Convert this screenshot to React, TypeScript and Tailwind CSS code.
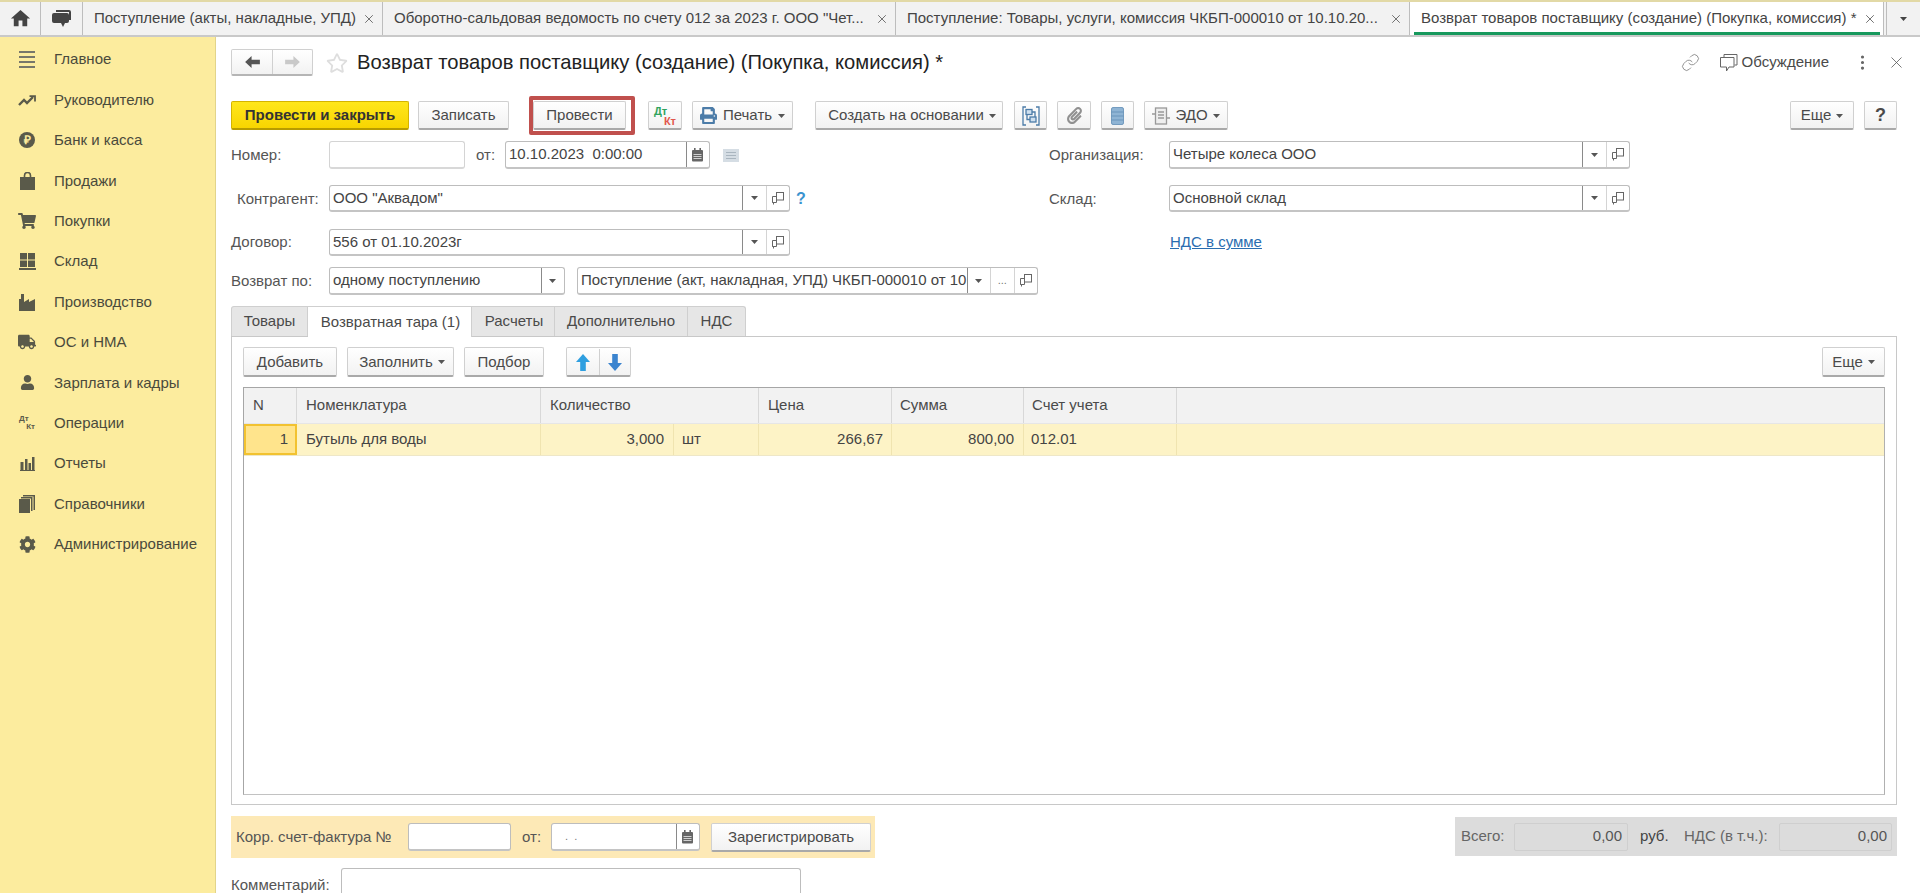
import React from "react";
import { Link, X, MoreVertical } from "lucide-react";
import { MdHome } from "react-icons/md";
import { FaShoppingCart, FaUser, FaCog, FaTruck, FaPrint, FaRegStar, FaPaperclip } from "react-icons/fa";

const Caret = ({ c = "#555" }: { c?: string }) => (
  <svg width="7" height="4" viewBox="0 0 7 4" className="shrink-0"><path d="M0 0h7L3.5 4z" fill={c} /></svg>
);
const Copy = () => (
  <svg width="12" height="13" viewBox="0 0 12 13" fill="none" stroke="#666" strokeWidth="1"><rect x="4.5" y="0.5" width="7" height="7.5" fill="#fff" /><path d="M4.5 4.5h-4v6h1v2M0.5 10.5h4V8" /></svg>
);
const Cal = () => (
  <svg width="13" height="14" viewBox="0 0 13 14"><rect x="1" y="2" width="11" height="11.5" rx="1" fill="#666" /><rect x="3" y="0" width="1.6" height="3" fill="#666" /><rect x="8.4" y="0" width="1.6" height="3" fill="#666" /><path d="M2.5 6.5h8M2.5 8.5h8M2.5 10.5h8" stroke="#ddd" strokeWidth="0.9" /></svg>
);
const ArrowH = ({ c, flip }: { c: string; flip?: boolean }) => (
  <svg width="15" height="12" viewBox="0 0 16 13" className={flip ? "rotate-180" : ""}><path d="M0 6.5L7 0v4h9v5H7v4z" fill={c} /></svg>
);
const ArrowV = ({ c, flip }: { c: string; flip?: boolean }) => (
  <svg width="14" height="17" viewBox="0 0 14 17" className={flip ? "rotate-180" : ""}><path d="M7 0l7 8H9.8v9H4.2V8H0z" fill={c} /></svg>
);
const Ic = ({ children }: { children: React.ReactNode }) => (
  <span className="w-[18px] h-[20px] flex items-center justify-center text-[#5a5a4a]">{children}</span>
);

const menu: [React.ReactNode, string][] = [
  [<svg width="16" height="17" viewBox="0 0 16 17" fill="#77776a"><rect y="0" width="16" height="2" /><rect y="5" width="16" height="2" /><rect y="10" width="16" height="2" /><rect y="15" width="16" height="2" /></svg>, "Главное"],
  [<svg width="18" height="11" viewBox="0 0 18 11" fill="none" stroke="#5a5a4a" strokeWidth="2.4"><path d="M1 10l5-5 3 3 6-6" /><path d="M11.5 1.2H17V6.5" strokeWidth="1.8" /></svg>, "Руководителю"],
  [<span className="w-4 h-4 rounded-full bg-[#5a5a4a] text-[#fcec9e] text-[12px] font-bold flex items-center justify-center leading-none">₽</span>, "Банк и касса"],
  [<svg width="15" height="18" viewBox="0 0 15 18" fill="#5a5a4a"><path d="M0 5h15v13H0z" /><path d="M4.5 7V3.5a3 3 0 0 1 6 0V7" fill="none" stroke="#5a5a4a" strokeWidth="1.6" /></svg>, "Продажи"],
  [<FaShoppingCart size={18} />, "Покупки"],
  [<svg width="17" height="17" viewBox="0 0 17 17" fill="#5a5a4a"><rect x="1" y="0" width="7" height="6.5" /><rect x="9" y="0" width="7" height="6.5" /><rect x="1" y="7.5" width="7" height="6.5" /><rect x="9" y="7.5" width="7" height="6.5" /><rect y="15" width="17" height="2" /></svg>, "Склад"],
  [<svg width="16" height="17" viewBox="0 0 16 17" fill="#5a5a4a"><path d="M0 17V5h2V0h3v8l5-3v3l6-3v12z" /></svg>, "Производство"],
  [<FaTruck size={18} />, "ОС и НМА"],
  [<FaUser size={15} />, "Зарплата и кадры"],
  [<span className="flex flex-col w-4 font-bold text-[8px] leading-[8px] text-[#5a5a4a]"><span>Дт</span><span className="text-right">Кт</span></span>, "Операции"],
  [<svg width="15" height="14" viewBox="0 0 15 14" fill="#5a5a4a"><rect x="0.5" y="5" width="3" height="8" /><rect x="5" y="2" width="2.5" height="11" /><rect x="8.5" y="6" width="2.5" height="7" /><rect x="12" y="0" width="2.5" height="13" /><rect y="13" width="15" height="1" /></svg>, "Отчеты"],
  [<svg width="16" height="18" viewBox="0 0 16 18" fill="#5a5a4a"><path d="M4 0h12v15h-1.5V1.5H4z" /><path d="M2 2h11.5v14H12V3.5H2z" /><path d="M0 4h11v14H0z" /></svg>, "Справочники"],
  [<FaCog size={17} />, "Администрирование"],
];

const Tab = ({ w, text, active }: { w: string; text: string; active?: boolean }) => (
  <div className={`${w} h-full shrink-0 flex items-center pl-[11px] relative border-r border-[#bdbdbd] ${active ? "bg-white" : ""}`}>
    <span className="flex-1 whitespace-nowrap overflow-hidden text-[15px] text-[#444]">{text}</span>
    <X size={14} strokeWidth={1.4} color="#555" className="mr-[6px] ml-[2px] shrink-0" />
    {active && <span className="absolute left-[4px] right-[3px] bottom-0 h-[3px] bg-[#17995d]" />}
  </div>
);

const btn = "shrink-0 flex items-center justify-center h-[29px] pt-px rounded-[2px] border border-[#d0d0d0] border-b-2 border-b-[#a9a9a9] bg-gradient-to-b from-white to-[#f2f2f2] text-[15px] text-[#4a4a4a] whitespace-nowrap";

const fieldBox = "shrink-0 flex items-stretch rounded-[3px] border border-[#bdbdbd] border-b-2 border-b-[#c4c4c4] bg-white text-[15px] text-[#444] overflow-hidden";
const Sub = ({ children, dark }: { children: React.ReactNode; dark?: boolean }) => (
  <span className={`w-[23.5px] shrink-0 flex items-center justify-center border-l ${dark ? "border-[#8a8a8a]" : "border-[#d4d4d4]"}`}>{children}</span>
);
const Text = ({ children }: { children?: React.ReactNode }) => (
  <span className="flex-1 min-w-0 pl-[3px] flex items-center whitespace-pre overflow-hidden">{children}</span>
);
const SelectBtns = () => (<><Sub dark><Caret /></Sub><Sub><Copy /></Sub></>);

const Lbl = ({ className, children }: { className: string; children: React.ReactNode }) => (
  <span className={`shrink-0 text-[15px] text-[#555] whitespace-nowrap ${className}`}>{children}</span>
);

const headCell = "shrink-0 h-full flex items-center pb-px border-r border-[#d8d8d8] text-[15px] text-[#4a4a4a]";
const rowCell = "shrink-0 h-full flex items-center border-r border-[#f0e4b0] text-[15px] text-[#444]";

export default function App() {
  return (
    <div className="w-[1920px] h-[893px] overflow-hidden flex flex-col bg-white font-['Liberation_Sans',Arial,sans-serif]">
      <div className="h-[37px] shrink-0 flex bg-[#f2f2f2] border-t-2 border-t-[#e2d9a6] border-b-2 border-b-[#c9c9c9]">
        <div className="w-[41px] h-full flex items-center justify-center border-r border-[#bdbdbd] text-[#444]"><MdHome size={23} /></div>
        <div className="w-[42px] h-full flex items-center justify-center border-r border-[#bdbdbd]">
          <svg width="19" height="17" viewBox="0 0 19 17" fill="#444"><path d="M4 0h13a2 2 0 0 1 2 2v8h-2V2H4z" /><path d="M2 3h13a2 2 0 0 1 2 2v6a2 2 0 0 1-2 2h-2l-2 4-2-4H2a2 2 0 0 1-2-2V5a2 2 0 0 1 2-2z" /></svg>
        </div>
        <Tab w="w-[300px]" text="Поступление (акты, накладные, УПД)" />
        <Tab w="w-[513px]" text={'Оборотно-сальдовая ведомость по счету 012 за 2023 г. ООО "Чет...'} />
        <Tab w="w-[514px]" text="Поступление: Товары, услуги, комиссия ЧКБП-000010 от 10.10.20..." />
        <Tab w="w-[474px]" text="Возврат товаров поставщику (создание) (Покупка, комиссия) *" active />
        <div className="flex-1 h-full ml-[2px] flex items-center justify-center border-l border-[#bdbdbd]"><Caret c="#444" /></div>
      </div>

      <div className="flex-1 min-h-0 flex">
        <aside className="w-[216px] shrink-0 bg-[#fcec9e] border-r border-[#e2d48a] pt-[2.5px]">
          {menu.map(([icon, label]) => (
            <div key={label} className="h-[40.4px] flex items-center pl-[18px]">
              <Ic>{icon}</Ic>
              <span className="ml-[18px] text-[15px] text-[#4a4a3c] whitespace-nowrap">{label}</span>
            </div>
          ))}
        </aside>

        <main className="flex-1 min-w-0 pl-[15px] pr-[23px] flex flex-col overflow-hidden">
          <div className="mt-[12px] h-[27px] flex items-center shrink-0">
            <div className="w-[82px] h-[27px] flex rounded-[2px] border border-[#d0d0d0] border-b-2 border-b-[#b5b5b5] bg-gradient-to-b from-white to-[#f2f2f2]">
              <span className="w-[41px] flex items-center justify-center border-r border-[#d0d0d0]"><ArrowH c="#555" /></span>
              <span className="flex-1 flex items-center justify-center"><ArrowH c="#c9c9c9" flip /></span>
            </div>
            <FaRegStar size={22} color="#dedede" className="ml-[13px]" />
            <h1 className="ml-[9px] text-[20.2px] font-normal text-[#222] whitespace-nowrap">Возврат товаров поставщику (создание) (Покупка, комиссия) *</h1>
            <div className="ml-auto -mr-[9px] flex items-center">
              <Link size={19} strokeWidth={1} color="#777" />
              <svg width="19" height="19" viewBox="0 0 19 19" fill="none" stroke="#666" strokeWidth="1" className="ml-[19px]"><path d="M5 4V1.5h13V12h-2.5" /><path d="M1.5 4.5h13.5V14h-5l-2.5 4v-4h-6z" /></svg>
              <span className="ml-[4px] text-[15px] text-[#4a4a4a]">Обсуждение</span>
              <MoreVertical size={19} strokeWidth={2} color="#666" className="ml-[24px]" />
              <X size={19} strokeWidth={1} color="#555" className="ml-[15px]" />
            </div>
          </div>

          <div className="mt-[25px] h-[29px] shrink-0 flex items-center">
            <div className="shrink-0 w-[178px] h-[29px] pt-px flex items-center justify-center rounded-[2px] border border-[#d4b400] border-b-2 border-b-[#b89c00] bg-gradient-to-b from-[#ffe71a] to-[#f8d500] text-[15px] font-bold text-[#333] whitespace-nowrap">Провести и закрыть</div>
            <div className={`${btn} w-[91px] ml-[9px]`}>Записать</div>
            <div className="shrink-0 ml-[20px] w-[106px] h-[39px] flex items-center border-[4px] border-[#c0504d] rounded-[2px]">
              <div className={`${btn} w-[93px]`}>Провести</div>
            </div>
            <div className={`${btn} w-[34px] ml-[13px]`}>
              <span className="flex flex-col w-[22px] font-bold text-[11px] leading-[10px]"><span className="text-[#2fa35d]">Дт</span><span className="text-right text-[#e2574c]">Кт</span></span>
            </div>
            <div className={`${btn} w-[101px] ml-[10px] gap-[6px]`}><FaPrint size={17} color="#4c7ca8" />Печать<Caret /></div>
            <div className={`${btn} w-[188px] ml-[22px] gap-[5px] pl-[6px]`}>Создать на основании<Caret /></div>
            <div className={`${btn} w-[33px] ml-[11px]`}>
              <svg width="18" height="20" viewBox="0 0 18 20" fill="none" stroke="#4c7ca8" strokeWidth="1.3"><path d="M4 1H1v18h3" /><path d="M14 1h3v18h-3" /><rect x="4" y="3.5" width="6" height="5" fill="#cfe0ef" /><rect x="8" y="11" width="6" height="5" fill="#cfe0ef" /><path d="M10 6h3v5M8 13.5H5V8.5" /></svg>
            </div>
            <div className={`${btn} w-[34px] ml-[10px]`}><FaPaperclip size={17} color="#909090" /></div>
            <div className={`${btn} w-[33px] ml-[10px]`}>
              <svg width="13" height="18" viewBox="0 0 13 18" fill="#8fb4d4" stroke="#5f8db5" strokeWidth="0.8"><rect x="0.5" y="0.5" width="12" height="17" rx="1.5" /><path d="M0.5 5h12M0.5 9h12M0.5 13h12" /></svg>
            </div>
            <div className={`${btn} w-[84px] ml-[10px] gap-[5px]`}>
              <svg width="18" height="18" viewBox="0 0 18 18" fill="none" stroke="#999" strokeWidth="1.3"><rect x="3.5" y="1" width="11" height="16" fill="#eee" /><path d="M6 5h6M6 8h6M6 11h6M0 7h3M15 11h3" /></svg>
              ЭДО<Caret />
            </div>
            <div className={`${btn} w-[64px] ml-auto gap-[5px]`}>Еще<Caret /></div>
            <div className={`${btn} w-[33px] ml-[10px] font-bold text-[18px]`}>?</div>
          </div>

          <div className="mt-[11px] h-[28px] shrink-0 flex items-center">
            <div className="w-[818px] shrink-0 flex items-center">
              <Lbl className="w-[98px]">Номер:</Lbl>
              <div className={`${fieldBox} w-[136px] h-[28px] border-[#d4d4d4] border-b-[#d8d8d8]`} />
              <Lbl className="w-[29px] ml-[11px]">от:</Lbl>
              <div className={`${fieldBox} w-[205px] h-[28px]`}><Text>10.10.2023  0:00:00</Text><Sub dark><Cal /></Sub></div>
              <svg width="16" height="13" viewBox="0 0 16 13" className="ml-[13px]"><rect width="16" height="13" fill="#d5dde4" /><path d="M3 3.5h10M3 6.5h10M3 9.5h10" stroke="#a9b5bf" /></svg>
            </div>
            <Lbl className="w-[120px]">Организация:</Lbl>
            <div className={`${fieldBox} w-[461px] h-[28px]`}><Text>Четыре колеса ООО</Text><SelectBtns /></div>
          </div>

          <div className="mt-[16px] h-[27px] shrink-0 flex items-center">
            <div className="w-[818px] shrink-0 flex items-center">
              <Lbl className="w-[98px] pl-[6px] pt-px">Контрагент:</Lbl>
              <div className={`${fieldBox} w-[461px] h-[27px]`}><Text><span className="pt-px">ООО "Аквадом"</span></Text><SelectBtns /></div>
              <span className="ml-[6px] text-[16px] font-bold text-[#3a93cf]">?</span>
            </div>
            <Lbl className="w-[120px] pt-px">Склад:</Lbl>
            <div className={`${fieldBox} w-[461px] h-[27px]`}><Text><span className="pt-px">Основной склад</span></Text><SelectBtns /></div>
          </div>

          <div className="mt-[17px] h-[27px] shrink-0 flex items-center">
            <div className="w-[818px] shrink-0 flex items-center">
              <Lbl className="w-[98px]">Договор:</Lbl>
              <div className={`${fieldBox} w-[461px] h-[27px]`}><Text>556 от 01.10.2023г</Text><SelectBtns /></div>
            </div>
            <span className="ml-[121px] text-[15px] text-[#2a6db0] underline whitespace-nowrap">НДС в сумме</span>
          </div>

          <div className="mt-[11px] h-[28px] shrink-0 flex items-center">
            <Lbl className="w-[98px]">Возврат по:</Lbl>
            <div className={`${fieldBox} w-[236px] h-[28px]`}><Text>одному поступлению</Text><Sub dark><Caret /></Sub></div>
            <div className={`${fieldBox} w-[461px] h-[28px] ml-[12px] text-[15.2px]`}>
              <Text>Поступление (акт, накладная, УПД) ЧКБП-000010 от 10</Text>
              <Sub dark><Caret /></Sub>
              <Sub><span className="text-[11px] text-[#777] leading-none">...</span></Sub>
              <Sub><Copy /></Sub>
            </div>
          </div>

          <div className="mt-[11px] h-[30px] shrink-0 flex items-stretch text-[15px] text-[#4a4a4a]">
            <div className="w-[77px] flex items-center justify-center bg-[#e6e6e6] border border-[#cfcfcf] border-b-0 rounded-tl-[3px]">Товары</div>
            <div className="w-[164px] pl-[2px] flex items-center justify-center bg-white border-t border-r border-[#cfcfcf] -mb-px z-10">Возвратная тара (1)</div>
            <div className="w-[83px] pl-[2px] flex items-center justify-center bg-[#e6e6e6] border-t border-r border-[#cfcfcf]">Расчеты</div>
            <div className="w-[133px] flex items-center justify-center bg-[#e6e6e6] border-t border-r border-[#cfcfcf]">Дополнительно</div>
            <div className="w-[58px] flex items-center justify-center bg-[#e6e6e6] border-t border-r border-[#cfcfcf] rounded-tr-[3px]">НДС</div>
          </div>

          <div className="h-[469px] shrink-0 flex flex-col border border-[#c8c8c8] px-[11px] pt-[10px] pb-[9px]">
            <div className="h-[30px] shrink-0 flex items-center">
              <div className={`${btn} h-[30px] w-[94px]`}>Добавить</div>
              <div className={`${btn} h-[30px] w-[107px] ml-[10px] gap-[5px] pl-[3px]`}>Заполнить<Caret /></div>
              <div className={`${btn} h-[30px] w-[80px] ml-[10px]`}>Подбор</div>
              <div className={`${btn} h-[30px] w-[65px] ml-[22px]`}>
                <span className="w-[33px] h-full flex items-center justify-center border-r border-[#d0d0d0]"><ArrowV c="#2f9fe0" /></span>
                <span className="flex-1 h-full flex items-center justify-center"><ArrowV c="#3b84cf" flip /></span>
              </div>
              <div className={`${btn} h-[30px] w-[63px] ml-auto gap-[5px]`}>Еще<Caret /></div>
            </div>

            <div className="mt-[10px] flex-1 min-h-0 border border-[#a6a6a6] border-b-[#c2c2c2] border-r-[#b0b0b0]">
              <div className="h-[35px] flex bg-[#f2f2f2]">
                <div className={`${headCell} w-[53px] pl-[9px]`}>N</div>
                <div className={`${headCell} w-[244px] pl-[9px]`}>Номенклатура</div>
                <div className={`${headCell} w-[218px] pl-[9px]`}>Количество</div>
                <div className={`${headCell} w-[133px] pl-[9px]`}>Цена</div>
                <div className={`${headCell} w-[132px] pl-[8px]`}>Сумма</div>
                <div className={`${headCell} w-[153px] pl-[8px]`}>Счет учета</div>
                <div className="flex-1" />
              </div>
              <div className="h-[33px] flex bg-[#fdf3c6] border-t border-[#e6e6e6] border-b border-b-[#eee7c8]">
                <div className="w-[53px] shrink-0 h-full flex items-center justify-end pr-[7px] bg-[#ffe48c] border-2 border-[#f2c230] text-[15px] text-[#444]">1</div>
                <div className={`${rowCell} w-[244px] pl-[9px]`}>Бутыль для воды</div>
                <div className={`${rowCell} w-[133px] justify-end pr-[9px]`}>3,000</div>
                <div className={`${rowCell} w-[85px] pl-[8px]`}>шт</div>
                <div className={`${rowCell} w-[133px] justify-end pr-[8px]`}>266,67</div>
                <div className={`${rowCell} w-[132px] justify-end pr-[9px]`}>800,00</div>
                <div className={`${rowCell} w-[153px] pl-[7px]`}>012.01</div>
                <div className="flex-1" />
              </div>
            </div>
          </div>

          <div className="mt-[11px] shrink-0 flex justify-between items-start">
            <div className="w-[644px] h-[42px] flex items-center bg-[#fde9b6] pl-[5px] text-[15px]">
              <Lbl className="w-[172px] text-[#4a4030]">Корр. счет-фактура №</Lbl>
              <div className={`${fieldBox} w-[103px] h-[28px]`} />
              <Lbl className="w-[29px] ml-[11px]">от:</Lbl>
              <div className={`${fieldBox} w-[149px] h-[28px]`}>
                <Text><span className="pl-[10px] text-[11px] text-[#777]">.  .</span></Text>
                <Sub dark><Cal /></Sub>
              </div>
              <div className={`${btn} w-[160px] ml-[11px]`}>Зарегистрировать</div>
            </div>
            <div className="w-[442px] h-[39px] mt-px flex items-center bg-[#dcdcdc] pl-[6px] text-[15px]">
              <span className="w-[53px] shrink-0 text-[#666]">Всего:</span>
              <div className="w-[114px] shrink-0 h-[28px] flex items-center justify-end pr-[5px] rounded-[2px] border border-[#cfcfcf] text-[#555]">0,00</div>
              <span className="ml-[12px] w-[44px] shrink-0 text-[#444]">руб.</span>
              <span className="w-[95px] shrink-0 text-[#666] whitespace-nowrap">НДС (в т.ч.):</span>
              <div className="w-[113px] shrink-0 h-[28px] flex items-center justify-end pr-[4px] rounded-[2px] border border-[#cfcfcf] text-[#555]">0,00</div>
            </div>
          </div>

          <div className="mt-[10px] shrink-0 flex items-start">
            <Lbl className="w-[109.5px] mt-[6px]">Комментарий:</Lbl>
            <div className={`${fieldBox} w-[460px] h-[40px]`} />
          </div>
        </main>
      </div>
    </div>
  );
}
